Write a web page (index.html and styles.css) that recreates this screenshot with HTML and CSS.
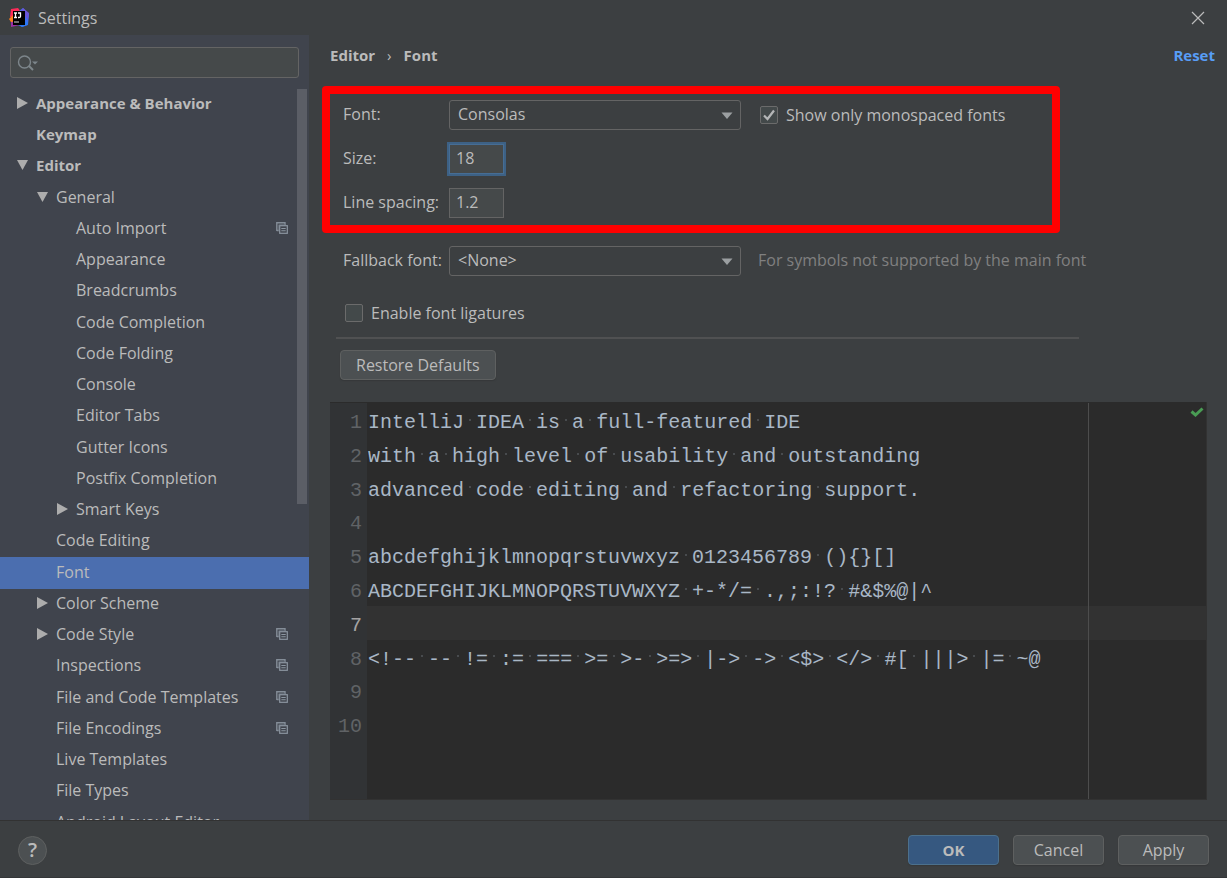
FILE: index.html
```html
<!DOCTYPE html>
<html lang="en">
<head>
<meta charset="utf-8">
<title>Settings</title>
<link rel="stylesheet" href="styles.css">
</head>
<body>
<svg class="defs" aria-hidden="true">
  <symbol id="copy" viewBox="0 0 12 12"><path d="M.8 9V.8H9V3M.8 8.5H3" fill="none" stroke="#848d98" stroke-width="1.4"/><path d="M2.8 9V2.8H9" fill="none" stroke="#6a737e" stroke-width="1"/><rect x="3.7" y="3.7" width="7.6" height="7.6" fill="#40444d" stroke="#8c96a1" stroke-width="1.2"/><path d="M5.3 6.5h4.4M5.3 8.7h4.4" stroke="#8c96a1" stroke-width="1.1"/></symbol>
  <symbol id="right" viewBox="0 0 12 12"><path d="M1 0L12 6L1 12Z" fill="#adadad"/></symbol>
  <symbol id="down" viewBox="0 0 12 12"><path d="M1 1H12L6.500 11Z" fill="#adadad"/></symbol>
  <symbol id="combo" viewBox="0 0 12 7"><path d="M.5 .5H11.500L6 7Z" fill="#9b9fa1"/></symbol>
</svg>
<div class="window">
  <header class="titlebar">
    <svg class="logo" viewBox="0 0 20 20" aria-hidden="true">
      <path d="M2 1L9 0L12 4L7 12L1 9Z" fill="#fe2b59"/>
      <path d="M0 11L4 7L5 16L2 14Z" fill="#fc801d"/>
      <path d="M10 3L14 0L20 6L19 17L13 19L9 15Z" fill="#3c6ff0"/>
      <path d="M12 3L14 0L20 5L19 12Z" fill="#6a55d8"/>
      <path d="M2 14L9 13L11 17L2 19Z" fill="#9a2fa5"/>
      <path d="M9 14H19L18 17L13 19L9 17Z" fill="#2a79f5"/>
      <rect x="4" y="3" width="12" height="14" fill="#000"/>
      <path d="M5 5H8M6.500 5V9M5 9.500H8M9 5H11.500V8.500Q11.500 9.500 10 9.500H9" fill="none" stroke="#fff" stroke-width="1.300"/>
      <path d="M5 14H10" stroke="#aaa" stroke-width="1.300"/>
    </svg>
    <h1>Settings</h1>
    <button class="close" aria-label="Close"><svg viewBox="0 0 12 12"><path d="M0 0L12 12M12 0L0 12" stroke="#bbb" stroke-width="1.200"/></svg></button>
  </header>
  <div class="body">
    <aside class="sidebar">
      <label class="search">
        <svg viewBox="0 0 21 16" aria-hidden="true"><circle cx="5.500" cy="7" r="6" fill="none" stroke="#7d868b" stroke-width="1.400"/><path d="M10 11L14 15" stroke="#7d868b" stroke-width="2"/><path d="M13 6.500H19L16 9.500Z" fill="#7d868b"/></svg>
        <input type="text" aria-label="Search settings">
      </label>
      <div class="treebox">
        <ul class="tree">
          <li class="l0 strong"><svg><use href="#right"/></svg><span>Appearance &amp; Behavior</span></li>
          <li class="l0 strong leaf"><span>Keymap</span></li>
          <li class="l0 strong"><svg><use href="#down"/></svg><span>Editor</span></li>
          <li class="l1"><svg><use href="#down"/></svg><span>General</span></li>
          <li class="l2 leaf"><span>Auto Import</span><svg class="copy"><use href="#copy"/></svg></li>
          <li class="l2 leaf"><span>Appearance</span></li>
          <li class="l2 leaf"><span>Breadcrumbs</span></li>
          <li class="l2 leaf"><span>Code Completion</span></li>
          <li class="l2 leaf"><span>Code Folding</span></li>
          <li class="l2 leaf"><span>Console</span></li>
          <li class="l2 leaf"><span>Editor Tabs</span></li>
          <li class="l2 leaf"><span>Gutter Icons</span></li>
          <li class="l2 leaf"><span>Postfix Completion</span></li>
          <li class="l2"><svg><use href="#right"/></svg><span>Smart Keys</span></li>
          <li class="l1 leaf"><span>Code Editing</span></li>
          <li class="l1 leaf selected"><span>Font</span></li>
          <li class="l1"><svg><use href="#right"/></svg><span>Color Scheme</span></li>
          <li class="l1"><svg><use href="#right"/></svg><span>Code Style</span><svg class="copy"><use href="#copy"/></svg></li>
          <li class="l1 leaf"><span>Inspections</span><svg class="copy"><use href="#copy"/></svg></li>
          <li class="l1 leaf"><span>File and Code Templates</span><svg class="copy"><use href="#copy"/></svg></li>
          <li class="l1 leaf"><span>File Encodings</span><svg class="copy"><use href="#copy"/></svg></li>
          <li class="l1 leaf"><span>Live Templates</span></li>
          <li class="l1 leaf"><span>File Types</span></li>
          <li class="l1 leaf"><span>Android Layout Editor</span></li>
        </ul>
        <div class="scrollbar"></div>
      </div>
    </aside>
    <main class="panel">
      <div class="crumbs"><span>Editor</span><span class="sep">›</span><span>Font</span><a href="#">Reset</a></div>
      <div class="form">
        <div class="marked">
          <div class="row">
            <label class="name" for="font">Font:</label>
            <div class="combo"><select id="font"><option>Consolas</option></select><svg><use href="#combo"/></svg></div>
            <label class="check"><input type="checkbox" checked><svg viewBox="0 0 18 18"><path d="M4 9.500L7.500 13L14 4.500" fill="none" stroke="#b4b6b7" stroke-width="2.200"/></svg>Show only monospaced fonts</label>
          </div>
          <div class="row"><label class="name" for="size">Size:</label><input class="field focused" id="size" type="text" value="18"></div>
          <div class="row"><label class="name" for="spacing">Line spacing:</label><input class="field" id="spacing" type="text" value="1.2"></div>
        </div>
        <div class="row fallback">
          <label class="name" for="fallback">Fallback font:</label>
          <div class="combo"><select id="fallback"><option>&lt;None&gt;</option></select><svg><use href="#combo"/></svg></div>
          <span class="hint">For symbols not supported by the main font</span>
        </div>
        <label class="check ligatures"><input type="checkbox">Enable font ligatures</label>
        <hr>
        <button class="btn restore">Restore Defaults</button>
      </div>
      <div class="editor">
        <ol class="gutter"><li>1</li><li>2</li><li>3</li><li>4</li><li>5</li><li>6</li><li class="current">7</li><li>8</li><li>9</li><li>10</li></ol>
        <ol class="code">
          <li>IntelliJ<i> </i>IDEA<i> </i>is<i> </i>a<i> </i>full-featured<i> </i>IDE</li>
          <li>with<i> </i>a<i> </i>high<i> </i>level<i> </i>of<i> </i>usability<i> </i>and<i> </i>outstanding</li>
          <li>advanced<i> </i>code<i> </i>editing<i> </i>and<i> </i>refactoring<i> </i>support.</li>
          <li></li>
          <li>abcdefghijklmnopqrstuvwxyz<i> </i>0123456789<i> </i>(){}[]</li>
          <li>ABCDEFGHIJKLMNOPQRSTUVWXYZ<i> </i>+-*/=<i> </i>.,;:!?<i> </i>#&amp;$%@|^</li>
          <li class="current"></li>
          <li>&lt;!--<i> </i>--<i> </i>!=<i> </i>:=<i> </i>===<i> </i>&gt;=<i> </i>&gt;-<i> </i>&gt;=&gt;<i> </i>|-&gt;<i> </i>-&gt;<i> </i>&lt;$&gt;<i> </i>&lt;/&gt;<i> </i>#[<i> </i>|||&gt;<i> </i>|=<i> </i>~@</li>
          <li></li>
          <li></li>
        </ol>
        <div class="margin-line"></div>
        <svg class="ok-mark" viewBox="0 0 14 10"><path d="M1.500 4.500L5.500 8L12.500 1.500" fill="none" stroke="#499c54" stroke-width="3"/></svg>
      </div>
    </main>
  </div>
  <footer class="footer">
    <button class="help" aria-label="Help">?</button>
    <button class="btn primary">OK</button>
    <button class="btn">Cancel</button>
    <button class="btn">Apply</button>
  </footer>
</div>
</body>
</html>
```

FILE: styles.css
```css
* { box-sizing: border-box; }
body { margin: 0; background: #3c3f41; color: #bbb; font: 16px/20px "Open Sans", "Noto Sans", sans-serif; }
button, input, select { font: inherit; color: inherit; }
ul, ol { list-style: none; margin: 0; padding: 0; }
.defs { display: none; }
.window { display: flex; flex-direction: column; height: 100vh; overflow: hidden; border-bottom: 1px solid #343638; }

.titlebar { flex: none; display: flex; align-items: center; gap: 9px; height: 35px; padding: 0 23px 0 9px; }
.titlebar h1 { flex: 1; margin: 0; font-size: 16px; font-weight: 400; }
.logo { width: 20px; height: 20px; }
.close { display: flex; padding: 0; border: 0; background: none; }
.close svg { width: 12px; height: 12px; overflow: visible; }

.body { flex: 1; display: flex; min-height: 0; }
.sidebar { flex: none; width: 309px; display: flex; flex-direction: column; background: #40444d; }
.search { flex: none; display: flex; align-items: center; height: 31px; margin: 12px 10px 11px; padding-left: 8px; border: 1px solid #646464; border-radius: 3px; background: #45494a; }
.search svg { width: 21px; height: 16px; overflow: visible; }
.search input { flex: 1; min-width: 0; border: 0; outline: 0; background: none; }
.treebox { flex: 1; min-height: 0; position: relative; overflow: hidden; }
.tree li { display: flex; align-items: center; height: 31px; padding: 0 21px 3px 0; }
.tree li:nth-child(4n) { height: 32px; }
.tree svg { flex: none; width: 12px; height: 12px; margin-right: 8px; }
.tree span { flex: 1; white-space: nowrap; }
.tree .copy { margin-right: 0; }
.tree .l0 { padding-left: 16px; }
.tree .l1 { padding-left: 36px; }
.tree .l2 { padding-left: 56px; }
.leaf::before { content: ""; width: 20px; }
.strong { font-size: 15px; font-weight: 700; }
.selected { background: #4b6eaf; }
.scrollbar { position: absolute; top: 0; right: 2px; width: 10px; height: 415px; background: #5b5e66; }

.panel { flex: 1; min-width: 0; display: flex; flex-direction: column; padding: 0 20px 20px 13px; }
.crumbs { flex: none; display: flex; gap: 12px; margin: 10px -8px 21px 8px; font-size: 15px; font-weight: 700; }
.crumbs .sep { font-weight: 400; }
.crumbs a { margin-left: auto; color: #589df6; text-decoration: none; }
.form { flex: none; }
.marked { display: grid; gap: 14px; max-width: 738px; padding: 6px 0 7px 13px; border: 8px solid #f00; border-radius: 4px; }
.row { display: flex; align-items: center; height: 30px; }
.name { flex: none; width: 106px; padding-bottom: 2px; white-space: nowrap; }
.combo { position: relative; flex: none; width: 292px; }
.combo select { display: block; width: 100%; height: 30px; padding: 0 8px 2px; appearance: none; border: 1px solid #646464; border-radius: 3px; background: #3c3f41; }
.combo svg { position: absolute; right: 8px; top: 12px; width: 12px; height: 7px; pointer-events: none; }
.field { width: 55px; height: 30px; padding: 0 6px 2px; border: 1px solid #646464; background: #45494a; outline: 0; }
.focused { border-color: #466d94; box-shadow: 0 0 0 2px #3d6185; }
.check { position: relative; display: flex; align-items: center; gap: 8px; white-space: nowrap; }
.check input { width: 18px; height: 18px; margin: 0; appearance: none; border: 1px solid #6b6b6b; border-radius: 2px; background: #43494a; }
.check svg { position: absolute; left: 0; width: 18px; height: 18px; pointer-events: none; }
.row .check { margin-left: 19px; }
.fallback { margin: 13px 0 0 21px; }
.hint { margin-left: 17px; padding-bottom: 2px; color: #808080; white-space: nowrap; }
.ligatures { margin: 27px 0 0 23px; }
hr { max-width: 743px; height: 2px; margin: 14px 0 11px 14px; border: 0; background: #505152; }
.btn { height: 30px; min-width: 91px; padding: 0 15px; border: 1px solid #5e6060; border-radius: 4px; background: #4c5052; box-shadow: 0 1px 1px #36383a; white-space: nowrap; }
.restore { display: block; min-width: 155px; margin-left: 18px; }

.editor { position: relative; flex: 1; min-height: 0; display: flex; margin: 22px 0 0 8px; padding-top: 1px; border: 1px solid #323232; border-width: 0 1px 1px 0; background: #2b2b2b; font: 20px/34px "Liberation Mono", monospace; overflow: hidden; }
.gutter { width: 37px; padding-right: 5px; background: #313335; color: #606366; text-align: right; }
.gutter .current { color: #a4a3a3; }
.editor li { display: flex; align-items: center; justify-content: flex-end; height: 34px; padding-top: 6px; white-space: pre; }
.editor li:nth-child(5n+3) { height: 33px; }
.code { flex: 1; color: #a9b7c6; }
.code li { justify-content: flex-start; padding-left: 1px; }
.code .current { background: #323232; }
.code i { font-style: normal; background: linear-gradient(#484b4e, #484b4e) center 40% / 2px 2px no-repeat; }
.margin-line { position: absolute; top: 1px; bottom: 0; left: 758px; width: 1px; background: #4d4d4d; }
.ok-mark { position: absolute; top: 5px; right: 2px; width: 14px; height: 10px; }

.footer { flex: none; display: flex; align-items: center; gap: 14px; height: 57px; padding: 2px 18px 0; border-top: 1px solid #323232; }
.help { width: 29px; height: 29px; margin-right: auto; padding: 0; border: 1px solid #5e6060; border-radius: 50%; background: #4c5052; font-size: 20px; font-weight: 600; }
.primary { border-color: #4c708c; background: #365880; font-size: 15px; font-weight: 700; }
```
